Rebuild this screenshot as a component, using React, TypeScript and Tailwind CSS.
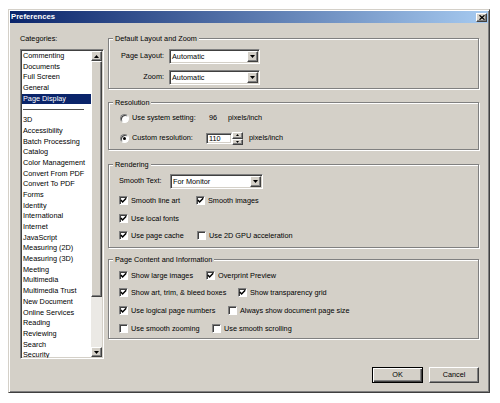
import React from "react";

const sunken =
  "border border-t-[#808080] border-l-[#808080] border-b-white border-r-white shadow-[inset_1px_1px_0_#404040,inset_-1px_-1px_0_#d4d0c8]";
const raised =
  "border border-t-white border-l-white border-b-[#404040] border-r-[#404040] shadow-[inset_-1px_-1px_0_#808080] bg-[#d4d0c8]";

function Tri({ up = false }: { up?: boolean }) {
  return (
    <svg width="5" height="3" viewBox="0 0 5 3">
      {up ? <path d="M2.5 0 L5 3 L0 3 Z" fill="black" /> : <path d="M0 0 L5 0 L2.5 3 Z" fill="black" />}
    </svg>
  );
}

function Select({ value, w }: { value: string; w: string }) {
  return (
    <div className={`${sunken} ${w} h-[15px] bg-white flex items-center pl-[2px] pr-[1px]`}>
      <span className="flex-1 text-[7.3px] leading-[9px]">{value}</span>
      <span className={`${raised} w-[11px] h-[11px] flex items-center justify-center`}>
        <Tri />
      </span>
    </div>
  );
}

function Check({ on }: { on: boolean }) {
  return (
    <span className="w-[9px] h-[9px] shrink-0 bg-white border border-t-[#808080] border-l-[#808080] border-b-white border-r-white shadow-[inset_1px_1px_0_#404040] flex items-center justify-center">
      {on && (
        <svg width="7" height="7" viewBox="0 0 7 7">
          <path d="M0.8 3 L2.6 4.9 L6.2 1.2" stroke="black" strokeWidth="1.5" fill="none" />
        </svg>
      )}
    </span>
  );
}

function CheckItem({ on, label, w = "" }: { on: boolean; label: string; w?: string }) {
  return (
    <div className={`flex items-center gap-[3px] ${w}`}>
      <Check on={on} />
      <span className="text-[7.3px] leading-[9px] whitespace-nowrap">{label}</span>
    </div>
  );
}

function Radio({ on }: { on: boolean }) {
  return (
    <span className="w-[9px] h-[9px] shrink-0 rounded-full bg-white border border-t-[#808080] border-l-[#808080] border-b-white border-r-white shadow-[inset_1px_1px_0_#404040] flex items-center justify-center">
      {on && <span className="w-[3px] h-[3px] rounded-full bg-black" />}
    </span>
  );
}

function Group({ title, cls, children }: { title: string; cls: string; children: React.ReactNode }) {
  return (
    <div
      className={`border border-[#808080] shadow-[1px_1px_0_#fff,inset_1px_1px_0_#fff] flex flex-col pl-[10px] ${cls}`}
    >
      <span className="-mt-[5px] ml-[-6px] self-start px-[2px] bg-[#d4d0c8] h-[9px] leading-[9px] text-[7.3px] whitespace-nowrap">
        {title}
      </span>
      {children}
    </div>
  );
}

const cats = [
  "Commenting",
  "Documents",
  "Full Screen",
  "General",
  "Page Display",
  "-",
  "3D",
  "Accessibility",
  "Batch Processing",
  "Catalog",
  "Color Management",
  "Convert From PDF",
  "Convert To PDF",
  "Forms",
  "Identity",
  "International",
  "Internet",
  "JavaScript",
  "Measuring (2D)",
  "Measuring (3D)",
  "Meeting",
  "Multimedia",
  "Multimedia Trust",
  "New Document",
  "Online Services",
  "Reading",
  "Reviewing",
  "Search",
  "Security",
];

export default function App() {
  return (
    <div className="w-[500px] h-[403px] bg-white pt-[9px] pl-[8px] font-['Liberation_Sans',Arial,sans-serif] text-black">
      <div className="w-[482px] h-[384px] bg-[#d4d0c8] border border-t-[#d4d0c8] border-l-[#d4d0c8] border-b-[#404040] border-r-[#404040] shadow-[inset_1px_1px_0_#fff,inset_-1px_-1px_0_#808080] p-[1px] flex flex-col">
        {/* Title bar */}
        <div className="h-[12px] bg-[linear-gradient(to_right,#0a246a,#a6caf0)] flex items-center justify-between pl-[1px] pr-[1px]">
          <span className="text-white font-bold text-[7.7px] leading-[10px]">Preferences</span>
          <span className={`${raised} w-[11px] h-[9px] flex items-center justify-center`}>
            <svg width="6" height="5" viewBox="0 0 6 5">
              <path d="M0.5 0.3 L5.5 4.7 M5.5 0.3 L0.5 4.7" stroke="black" strokeWidth="1.3" />
            </svg>
          </span>
        </div>

        {/* Body */}
        <div className="flex flex-row pt-[10px] pl-[10px]">
          {/* Left column */}
          <div className="w-[84px] flex flex-col">
            <span className="h-[11px] leading-[11px] text-[7.3px]">Categories:</span>
            <div className={`${sunken} mt-[5px] h-[310px] bg-white flex overflow-hidden`}>
              <div className="flex-1 flex flex-col pt-[1px] pl-[1px] overflow-hidden">
                {cats.map((c, i) =>
                  c === "-" ? (
                    <div key={i} className="h-[10.7px] shrink-0 flex items-center pl-[1px]">
                      <div className="w-[61px] h-[1px] bg-[#505050]" />
                    </div>
                  ) : (
                    <div
                      key={i}
                      className={`h-[10.7px] shrink-0 leading-[10.7px] text-[7.3px] pl-[1px] whitespace-nowrap ${
                        c === "Page Display" ? "bg-[#0a246a] text-white" : ""
                      }`}
                    >
                      {c}
                    </div>
                  )
                )}
              </div>
              <div className="w-[11px] shrink-0 flex flex-col mt-[1px] mr-[1px] mb-[1px]">
                <span className={`${raised} h-[10px] flex items-center justify-center`}>
                  <Tri up />
                </span>
                <span className={`${raised} h-[236px]`} />
                <span className="flex-1 bg-[#ebe9e5]" />
                <span className={`${raised} h-[10px] flex items-center justify-center`}>
                  <Tri />
                </span>
              </div>
            </div>
          </div>

          {/* Right column */}
          <div className="ml-[4px] w-[371px] flex flex-col mt-[5px]">
            <Group title="Default Layout and Zoom" cls="h-[51px]">
              <div className="mt-[6px] flex items-center h-[15px]">
                <span className="w-[45px] text-right text-[7.3px]">Page Layout:</span>
                <span className="ml-[5px]">
                  <Select value="Automatic" w="w-[91px]" />
                </span>
              </div>
              <div className="mt-[6px] flex items-center h-[15px]">
                <span className="w-[45px] text-right text-[7.3px]">Zoom:</span>
                <span className="ml-[5px]">
                  <Select value="Automatic" w="w-[91px]" />
                </span>
              </div>
            </Group>

            <Group title="Resolution" cls="mt-[13px] h-[48px]">
              <div className="mt-[6px] h-[11px] flex items-center text-[7.3px]">
                <div className="w-[90px] flex items-center gap-[3px] pl-[1px]">
                  <Radio on={false} />
                  <span>Use system setting:</span>
                </div>
                <span className="w-[19px]">96</span>
                <span>pixels/inch</span>
              </div>
              <div className="mt-[8px] h-[13px] flex items-center text-[7.3px]">
                <div className="w-[87px] flex items-center gap-[3px] pl-[1px]">
                  <Radio on />
                  <span>Custom resolution:</span>
                </div>
                <div className={`${sunken} w-[26px] h-[11px] bg-white flex items-center pl-[2px] leading-[9px]`}>110</div>
                <div className="w-[11px] h-[13px] flex flex-col">
                  <span className={`${raised} h-[6.5px] flex items-center justify-center`}>
                    <svg width="3" height="2" viewBox="0 0 3 2">
                      <path d="M1.5 0 L3 2 L0 2 Z" fill="black" />
                    </svg>
                  </span>
                  <span className={`${raised} h-[6.5px] flex items-center justify-center`}>
                    <svg width="3" height="2" viewBox="0 0 3 2">
                      <path d="M0 0 L3 0 L1.5 2 Z" fill="black" />
                    </svg>
                  </span>
                </div>
                <span className="ml-[6px]">pixels/inch</span>
              </div>
            </Group>

            <Group title="Rendering" cls="mt-[14px] h-[84px]">
              <div className="mt-[5px] flex items-center h-[15px]">
                <span className="w-[51px] text-[7.3px]">Smooth Text:</span>
                <Select value="For Monitor" w="w-[93px]" />
              </div>
              <div className="mt-[6px] h-[10px] flex items-center">
                <CheckItem on label="Smooth line art" w="w-[77px]" />
                <CheckItem on label="Smooth images" />
              </div>
              <div className="mt-[8px] h-[10px] flex items-center">
                <CheckItem on label="Use local fonts" />
              </div>
              <div className="mt-[7px] h-[10px] flex items-center">
                <CheckItem on label="Use page cache" w="w-[78px]" />
                <CheckItem on={false} label="Use 2D GPU acceleration" />
              </div>
            </Group>

            <Group title="Page Content and Information" cls="mt-[11px] h-[80px]">
              <div className="mt-[6px] h-[10px] flex items-center">
                <CheckItem on label="Show large images" w="w-[87px]" />
                <CheckItem on label="Overprint Preview" />
              </div>
              <div className="mt-[7px] h-[10px] flex items-center">
                <CheckItem on label="Show art, trim, & bleed boxes" w="w-[119px]" />
                <CheckItem on label="Show transparency grid" />
              </div>
              <div className="mt-[8px] h-[10px] flex items-center">
                <CheckItem on label="Use logical page numbers" w="w-[109px]" />
                <CheckItem on={false} label="Always show document page size" />
              </div>
              <div className="mt-[8px] h-[10px] flex items-center">
                <CheckItem on={false} label="Use smooth zooming" w="w-[93px]" />
                <CheckItem on={false} label="Use smooth scrolling" />
              </div>
            </Group>

            <div className="mt-[28px] flex justify-end gap-[6px]">
              <button className="w-[51px] h-[16px] bg-[#d4d0c8] border border-black shadow-[inset_1px_1px_0_#fff,inset_-1px_-1px_0_#404040,inset_-2px_-2px_0_#808080] text-[7.3px] leading-[14px]">
                OK
              </button>
              <button className={`${raised} w-[50px] h-[16px] text-[7.3px] leading-[14px]`}>Cancel</button>
            </div>
          </div>
        </div>
      </div>
    </div>
  );
}
